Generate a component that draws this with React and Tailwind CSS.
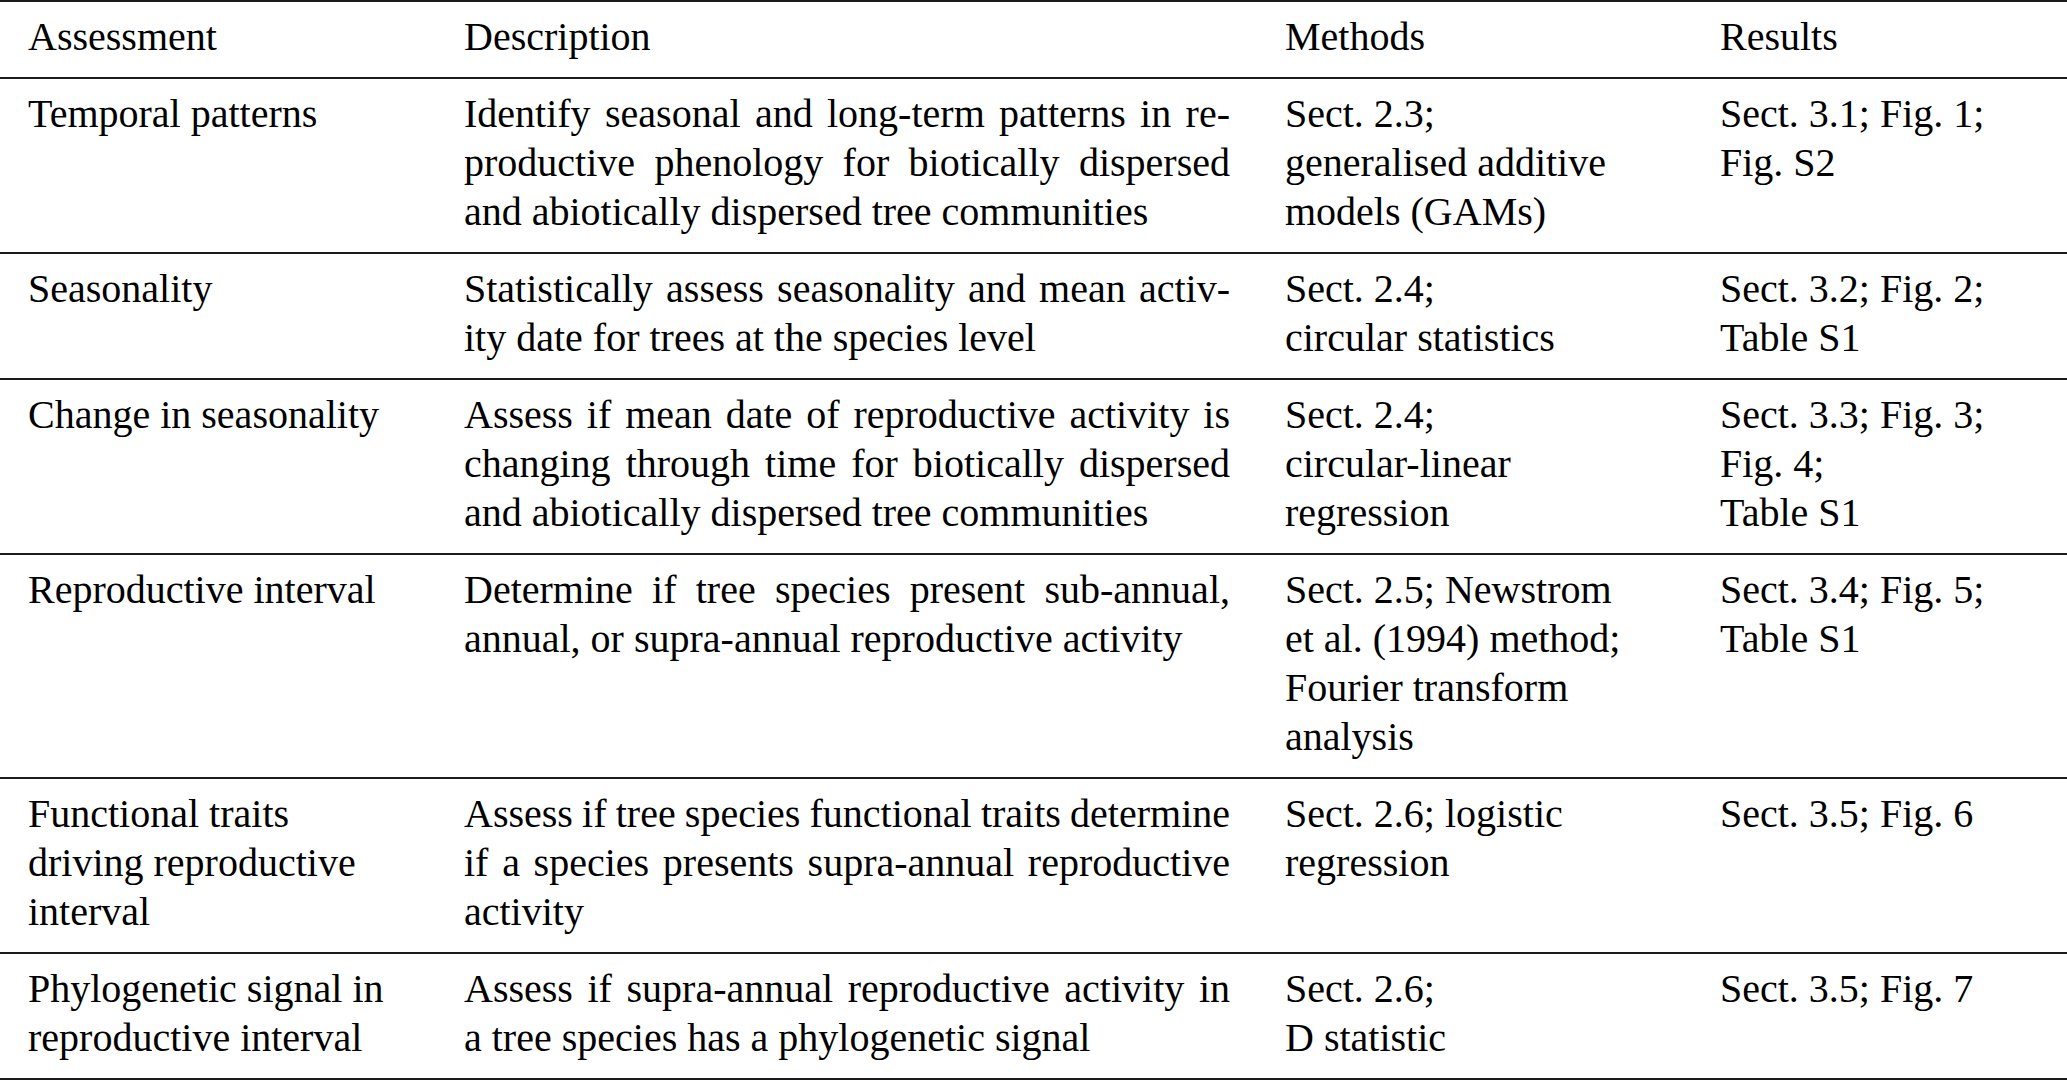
const header = ["Assessment", "Description", "Methods", "Results"];

const rows = [
  {
    assessment: ["Temporal patterns"],
    description: [
      { text: "Identify seasonal and long-term patterns in re-" },
      { text: "productive phenology for biotically dispersed" },
      { text: "and abiotically dispersed tree communities", last: true },
    ],
    methods: ["Sect. 2.3;", "generalised additive", "models (GAMs)"],
    results: ["Sect. 3.1; Fig. 1;", "Fig. S2"],
  },
  {
    assessment: ["Seasonality"],
    description: [
      { text: "Statistically assess seasonality and mean activ-" },
      { text: "ity date for trees at the species level", last: true },
    ],
    methods: ["Sect. 2.4;", "circular statistics"],
    results: ["Sect. 3.2; Fig. 2;", "Table S1"],
  },
  {
    assessment: ["Change in seasonality"],
    description: [
      { text: "Assess if mean date of reproductive activity is" },
      { text: "changing through time for biotically dispersed" },
      { text: "and abiotically dispersed tree communities", last: true },
    ],
    methods: ["Sect. 2.4;", "circular-linear", "regression"],
    results: ["Sect. 3.3; Fig. 3;", "Fig. 4;", "Table S1"],
  },
  {
    assessment: ["Reproductive interval"],
    description: [
      { text: "Determine if tree species present sub-annual," },
      { text: "annual, or supra-annual reproductive activity", last: true },
    ],
    methods: [
      "Sect. 2.5; Newstrom",
      "et al. (1994) method;",
      "Fourier transform",
      "analysis",
    ],
    results: ["Sect. 3.4; Fig. 5;", "Table S1"],
  },
  {
    assessment: ["Functional traits", "driving reproductive", "interval"],
    description: [
      { text: "Assess if tree species functional traits determine", tight: true },
      { text: "if a species presents supra-annual reproductive" },
      { text: "activity", last: true },
    ],
    methods: ["Sect. 2.6; logistic", "regression"],
    results: ["Sect. 3.5; Fig. 6"],
  },
  {
    assessment: ["Phylogenetic signal in", "reproductive interval"],
    description: [
      { text: "Assess if supra-annual reproductive activity in" },
      { text: "a tree species has a phylogenetic signal", last: true },
    ],
    methods: ["Sect. 2.6;", "D statistic"],
    results: ["Sect. 3.5; Fig. 7"],
  },
];

const Lines = ({ lines }) => (
  <div>
    {lines.map((line, i) => (
      <div key={i} className="whitespace-nowrap">
        {line}
      </div>
    ))}
  </div>
);

const Justified = ({ lines }) => (
  <div className="w-[766px]">
    {lines.map((line, i) => (
      <div
        key={i}
        className={
          line.last
            ? "whitespace-nowrap text-left"
            : line.tight
            ? "whitespace-nowrap text-justify [text-align-last:justify] [word-spacing:-3px]"
            : "whitespace-nowrap text-justify [text-align-last:justify]"
        }
      >
        {line.text}
      </div>
    ))}
  </div>
);

export default function App() {
  return (
    <div className="min-h-screen w-full bg-white text-black font-['Liberation_Serif','Times_New_Roman',serif] text-[40px] leading-[49px]">
      <div className="border-t-2 border-[#1a1a1a]">
        <div className="grid grid-cols-[436px_821px_435px_1fr] pl-[28px] pt-[10px] pb-[16px] border-b-2 border-[#1a1a1a]">
          {header.map((h) => (
            <div key={h} className="whitespace-nowrap">
              {h}
            </div>
          ))}
        </div>

        {rows.map((row, i) => (
          <div
            key={i}
            className="grid grid-cols-[436px_821px_435px_1fr] pl-[28px] pt-[10px] pb-[16px] border-b-2 border-[#1a1a1a]"
          >
            <Lines lines={row.assessment} />
            <Justified lines={row.description} />
            <Lines lines={row.methods} />
            <Lines lines={row.results} />
          </div>
        ))}
      </div>
    </div>
  );
}
